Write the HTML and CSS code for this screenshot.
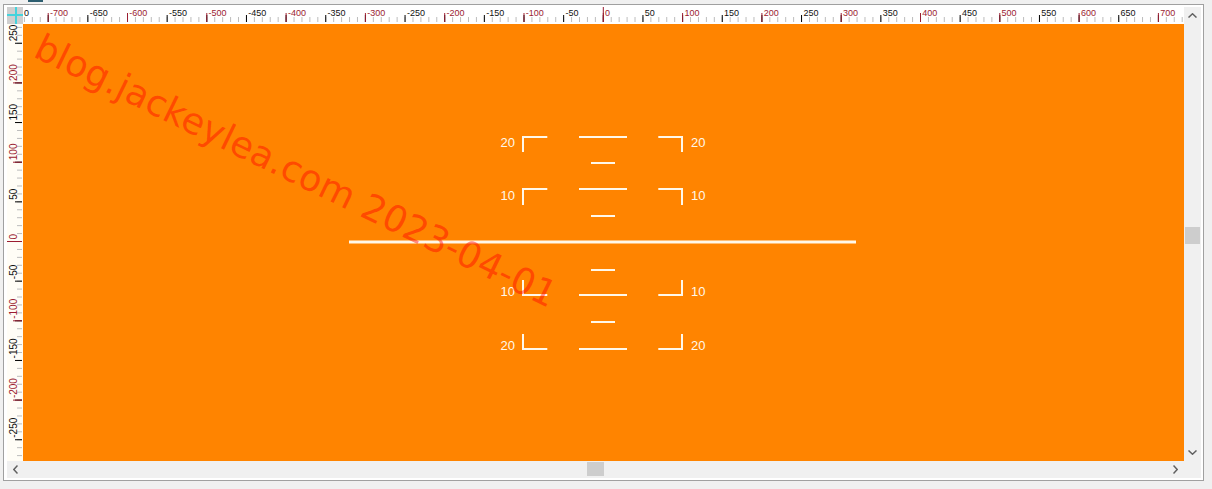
FILE: index.html
```html
<!DOCTYPE html>
<html lang="en">
<head>
  <meta charset="UTF-8" />
  <title>Pitch Ladder</title>
  <link rel="stylesheet" href="styles.css">
</head>
<body>

  <div class="tabbar"><div class="tab"></div></div>

  <div class="window">
    <div class="view">

      <div class="ruler-corner"></div>

      <!-- horizontal ruler: 10 units per minor tick, 0.793 px per unit -->
      <svg class="ruler ruler-top" width="1161" height="17" viewBox="0 0 1161 17">
        <defs>
          <pattern id="top-minor" patternUnits="userSpaceOnUse" x="0.91" y="0" width="7.93" height="17">
            <rect x="0" y="10" width="1" height="5" fill="#bcbcbc"/>
          </pattern>
          <pattern id="top-half" patternUnits="userSpaceOnUse" x="24.7" y="0" width="39.65" height="17">
            <rect x="0" y="8" width="1" height="7" fill="#000"/>
          </pattern>
          <pattern id="top-full" patternUnits="userSpaceOnUse" x="24.7" y="0" width="79.3" height="17">
            <rect x="0" y="6" width="1" height="9" fill="#9b1c31"/>
          </pattern>
        </defs>
        <rect width="1161" height="17" fill="url(#top-minor)"/>
        <rect width="1161" height="17" fill="url(#top-half)"/>
        <rect width="1161" height="17" fill="url(#top-full)"/>
        <rect x="579.8" y="0" width="1" height="15" fill="#9b1c31"/>
        <text class="lbl" x="1" y="9">0</text>
        <text class="lbl red" x="27" y="9">-700</text>
        <text class="lbl" x="66.7" y="9">-650</text>
        <text class="lbl red" x="106.3" y="9">-600</text>
        <text class="lbl" x="146" y="9">-550</text>
        <text class="lbl red" x="185.6" y="9">-500</text>
        <text class="lbl" x="225.3" y="9">-450</text>
        <text class="lbl red" x="264.9" y="9">-400</text>
        <text class="lbl" x="304.6" y="9">-350</text>
        <text class="lbl red" x="344.2" y="9">-300</text>
        <text class="lbl" x="383.9" y="9">-250</text>
        <text class="lbl red" x="423.5" y="9">-200</text>
        <text class="lbl" x="463.2" y="9">-150</text>
        <text class="lbl red" x="502.8" y="9">-100</text>
        <text class="lbl" x="542.5" y="9">-50</text>
        <text class="lbl red" x="582.1" y="9">0</text>
        <text class="lbl" x="621.8" y="9">50</text>
        <text class="lbl red" x="661.4" y="9">100</text>
        <text class="lbl" x="701.1" y="9">150</text>
        <text class="lbl red" x="740.7" y="9">200</text>
        <text class="lbl" x="780.4" y="9">250</text>
        <text class="lbl red" x="820" y="9">300</text>
        <text class="lbl" x="859.7" y="9">350</text>
        <text class="lbl red" x="899.3" y="9">400</text>
        <text class="lbl" x="939" y="9">450</text>
        <text class="lbl red" x="978.6" y="9">500</text>
        <text class="lbl" x="1018.3" y="9">550</text>
        <text class="lbl red" x="1057.9" y="9">600</text>
        <text class="lbl" x="1097.6" y="9">650</text>
        <text class="lbl red" x="1137.2" y="9">700</text>
      </svg>

      <div class="vscroll">
        <div class="sb-btn">
          <svg width="9" height="5" viewBox="0 0 9 5"><polyline points="0.5,4.5 4.5,0.8 8.5,4.5"/></svg>
        </div>
        <div class="track"><div class="thumb"></div></div>
        <div class="sb-btn">
          <svg width="9" height="5" viewBox="0 0 9 5"><polyline points="0.5,0.5 4.5,4.2 8.5,0.5"/></svg>
        </div>
      </div>

      <!-- vertical ruler, labels read bottom to top -->
      <svg class="ruler ruler-left" width="16" height="437" viewBox="0 0 16 437">
        <defs>
          <pattern id="left-minor" patternUnits="userSpaceOnUse" x="0" y="2.89" width="16" height="7.93">
            <rect x="10" y="0" width="5" height="1" fill="#bcbcbc"/>
          </pattern>
          <pattern id="left-half" patternUnits="userSpaceOnUse" x="0" y="18.75" width="16" height="39.65">
            <rect x="8" y="0" width="7" height="1" fill="#000"/>
          </pattern>
          <pattern id="left-full" patternUnits="userSpaceOnUse" x="0" y="58.4" width="16" height="79.3">
            <rect x="6" y="0" width="9" height="1" fill="#9b1c31"/>
          </pattern>
        </defs>
        <rect width="16" height="437" fill="url(#left-minor)"/>
        <rect width="16" height="437" fill="url(#left-half)"/>
        <rect width="16" height="437" fill="url(#left-full)"/>
        <rect x="0" y="217" width="15" height="1" fill="#9b1c31"/>
        <text class="lbl" transform="translate(9.5 17.25) rotate(-90)">250</text>
        <text class="lbl red" transform="translate(9.5 56.9) rotate(-90)">200</text>
        <text class="lbl" transform="translate(9.5 96.55) rotate(-90)">150</text>
        <text class="lbl red" transform="translate(9.5 136.2) rotate(-90)">100</text>
        <text class="lbl" transform="translate(9.5 175.85) rotate(-90)">50</text>
        <text class="lbl red" transform="translate(9.5 215.5) rotate(-90)">0</text>
        <text class="lbl" transform="translate(9.5 255.15) rotate(-90)">-50</text>
        <text class="lbl red" transform="translate(9.5 294.8) rotate(-90)">-100</text>
        <text class="lbl" transform="translate(9.5 334.45) rotate(-90)">-150</text>
        <text class="lbl red" transform="translate(9.5 374.1) rotate(-90)">-200</text>
        <text class="lbl" transform="translate(9.5 413.75) rotate(-90)">-250</text>
      </svg>

      <div class="canvas">
        <svg class="attitude" width="1161" height="437" viewBox="0 0 1161 437">
          <g class="ladder">
            <!-- horizon -->
            <line x1="326" y1="218" x2="833" y2="218" class="horizon"/>

            <!-- +20 -->
            <polyline points="524.3,113 500,113 500,128"/>
            <line x1="556" y1="113" x2="604" y2="113"/>
            <polyline points="635.3,113 659,113 659,128"/>
            <line x1="568" y1="139" x2="592" y2="139"/>

            <!-- +10 -->
            <polyline points="524.3,165 500,165 500,181"/>
            <line x1="556" y1="165" x2="604" y2="165"/>
            <polyline points="635.3,165 659,165 659,181"/>
            <line x1="568" y1="192" x2="592" y2="192"/>

            <!-- -10 -->
            <line x1="568" y1="246" x2="592" y2="246"/>
            <polyline points="500,256 500,271 524.3,271"/>
            <line x1="556" y1="271" x2="604" y2="271"/>
            <polyline points="659,256 659,271 635.3,271"/>

            <!-- -20 -->
            <line x1="568" y1="298" x2="592" y2="298"/>
            <polyline points="500,310 500,325 524.3,325"/>
            <line x1="556" y1="325" x2="604" y2="325"/>
            <polyline points="659,310 659,325 635.3,325"/>
          </g>

          <g class="pitch-labels">
            <text x="492" y="123" class="left">20</text>
            <text x="668" y="123">20</text>
            <text x="492" y="176" class="left">10</text>
            <text x="668" y="176">10</text>
            <text x="492" y="272" class="left">10</text>
            <text x="668" y="272">10</text>
            <text x="492" y="326" class="left">20</text>
            <text x="668" y="326">20</text>
          </g>

          <text class="watermark" transform="translate(9 32) rotate(26)">blog.jackeylea.com 2023-04-01</text>
        </svg>
      </div>

      <div class="hscroll">
        <div class="sb-btn">
          <svg width="5" height="9" viewBox="0 0 5 9"><polyline points="4.5,0.5 0.8,4.5 4.5,8.5"/></svg>
        </div>
        <div class="track"><div class="thumb"></div></div>
        <div class="sb-btn">
          <svg width="5" height="9" viewBox="0 0 5 9"><polyline points="0.5,0.5 4.2,4.5 0.5,8.5"/></svg>
        </div>
      </div>

      <div class="scroll-corner"></div>

    </div>
  </div>

</body>
</html>
```

FILE: styles.css
```css
* {
  margin: 0;
  padding: 0;
  box-sizing: border-box;
}

body {
  font-family: "Liberation Sans", Arial, sans-serif;
  background-color: #f0f0f0;
  overflow: hidden;
}

.tabbar {
  height: 4px;
}

.tab {
  width: 15px;
  height: 2px;
  margin-left: 28px;
  background-color: #2d5e70;
}

.window {
  width: 1201px;
  margin-left: 3px;
  padding: 2px 2px 2px 3px;
  border: 1px solid #a0a0a0;
  background-color: #fff;
}

.view {
  display: grid;
  grid-template-columns: 16px 1161px 17px;
  grid-template-rows: 17px 437px 17px;
}

svg {
  display: block;
}

/* ----- rulers ----- */

.ruler-corner {
  grid-column: 1;
  grid-row: 1;
  background:
    linear-gradient(#45d3dc, #45d3dc) 8px 0 / 2px 100% no-repeat,
    linear-gradient(#45d3dc, #45d3dc) 0 7px / 100% 2px no-repeat,
    #cfcfcf;
}

.ruler {
  background-color: #fff;
}

.ruler-top {
  grid-column: 2;
  grid-row: 1;
}

.ruler-left {
  grid-column: 1;
  grid-row: 2;
  background-color: #fffdf6;
}

.ruler .lbl {
  font-family: "Liberation Sans", Arial, sans-serif;
  font-size: 9px;
  fill: #111;
}

.ruler-left .lbl {
  font-size: 10px;
}

.ruler .lbl.red {
  fill: #9b1c31;
}

/* ----- drawing area ----- */

.canvas {
  grid-column: 2;
  grid-row: 2;
  background-color: #ff8400;
  overflow: hidden;
}

.ladder line,
.ladder polyline {
  fill: none;
  stroke: #fff8ea;
  stroke-width: 2;
}

.ladder .horizon {
  stroke-width: 3;
}

.pitch-labels text {
  font-family: "Liberation Sans", Arial, sans-serif;
  font-size: 13px;
  fill: #fff8ea;
}

.pitch-labels .left {
  text-anchor: end;
}

.watermark {
  font-family: "DejaVu Sans", sans-serif;
  font-size: 36.5px;
  fill: rgba(255, 0, 0, 0.45);
}

/* ----- scrollbars ----- */

.vscroll {
  grid-column: 3;
  grid-row: 1 / 3;
  display: flex;
  flex-direction: column;
  background-color: #f0f0f0;
}

.hscroll {
  grid-column: 1 / 3;
  grid-row: 3;
  display: flex;
  background-color: #f0f0f0;
}

.scroll-corner {
  grid-column: 3;
  grid-row: 3;
  background-color: #f0f0f0;
}

.sb-btn {
  width: 17px;
  height: 17px;
  flex-shrink: 0;
  display: flex;
  align-items: center;
  justify-content: center;
}

.sb-btn polyline {
  fill: none;
  stroke: #606060;
  stroke-width: 1.5;
}

.track {
  flex: 1;
}

.vscroll .track {
  padding: 203px 1px 0;
}

.vscroll .thumb {
  height: 17px;
  background-color: #cdcdcd;
}

.hscroll .track {
  padding: 1px 0 0 563px;
}

.hscroll .thumb {
  width: 17px;
  height: 14px;
  background-color: #cdcdcd;
}
```
